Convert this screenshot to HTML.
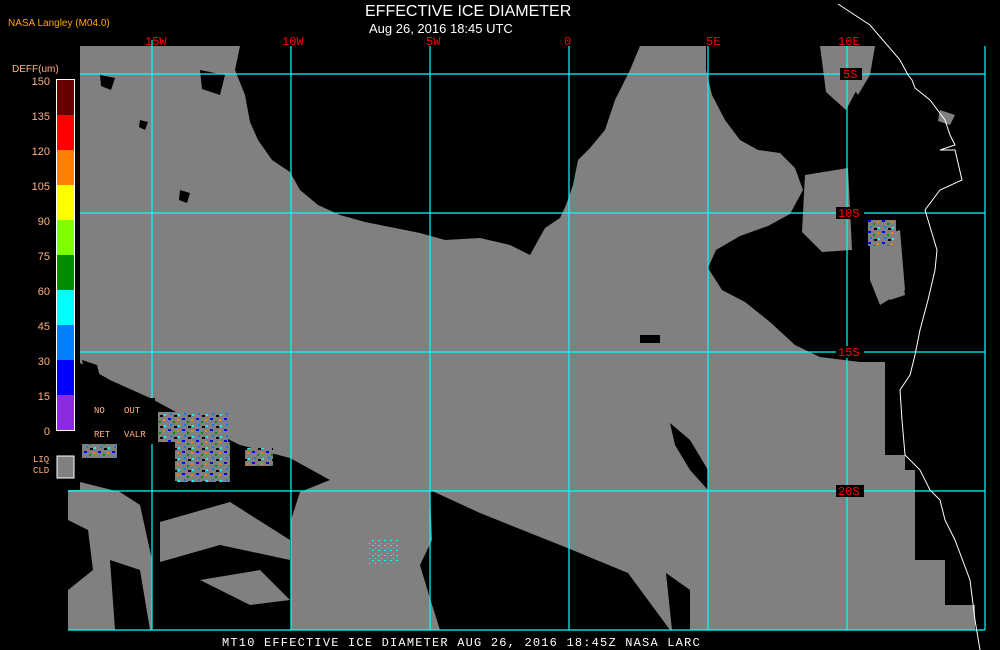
<!DOCTYPE html>
<html><head><meta charset="utf-8"><style>
html,body{margin:0;padding:0;background:#000;width:1000px;height:650px;overflow:hidden}
svg{display:block}
text{font-family:"Liberation Sans",sans-serif}
.m{font-family:"Liberation Mono",monospace}
</style></head><body>
<svg width="1000" height="650" viewBox="0 0 1000 650">
<defs>
<pattern id="sp" width="14" height="11" patternUnits="userSpaceOnUse">
<rect width="14" height="11" fill="#808080"/>
<rect x="0" y="0" width="3" height="2" fill="#0000ff"/>
<rect x="5" y="3" width="2" height="2" fill="#008c00"/>
<rect x="9" y="1" width="2" height="2" fill="#ff8000"/>
<rect x="2" y="6" width="2" height="2" fill="#0080ff"/>
<rect x="10" y="7" width="2" height="2" fill="#00ffff"/>
<rect x="6" y="8" width="3" height="2" fill="#000"/>
</pattern>
<pattern id="cy" width="6" height="5" patternUnits="userSpaceOnUse">
<rect width="6" height="5" fill="#808080"/>
<rect x="0" y="0" width="2" height="1" fill="#00ffff"/>
<rect x="3" y="3" width="1" height="1" fill="#00ffff"/>
</pattern>
</defs>
<rect width="1000" height="650" fill="#000"/>
<path fill="#808080" d="M80 46H985V630H68V490H80Z"/>
<g fill="#000">
<path d="M240 46H640L630 70 615 100 605 130 590 148 578 160 573 185 566 205 560 218 545 228 530 255 510 245 480 238 445 240 420 233 395 228 365 222 340 215 318 205 300 190 290 172 272 160 258 140 250 122 245 95 235 70Z"/>
<path d="M706 46H820L826 92 846 110 862 80 872 46H985V362H885L860 362 820 357 795 345 770 322 745 302 722 290 708 268 716 250 740 236 768 226 790 214 803 190 795 168 780 153 758 150 740 140 725 120 712 95 706 70Z"/>
<path d="M80 363L110 380 150 398 200 425 240 445 290 458 330 480 300 492 291 520 291 630H152V560L140 505 120 492 80 482Z"/>
<path d="M430 490L480 513 565 547 628 573 670 630H440L428 592 420 565 432 540Z"/>
<path d="M670 423L690 440 708 470 708 490 690 470 675 445Z"/>
<path d="M666 573L690 590 690 630H672Z"/>
<path d="M885 362H985V630H975V605H945V560H915V470H905V455H885Z"/>
<path d="M640 335h20v8h-20z"/>
<path d="M82 360l15 5 5 20-15 0z"/>
<path d="M180 190l10 3 -3 10 -8-3z"/>
<path d="M100 75l15 3 -4 12 -10-4z"/>
<path d="M140 120l8 2 -3 8-6-3z"/>
<path d="M200 70l25 5 -5 20 -18-6z"/>
<path d="M720 262l20 5 -8 10-12-5z"/>
<path d="M68 520l20 10 5 40 -25 20z"/>
<path d="M110 560l30 10 10 60h-35z"/>
</g>
<g fill="#808080">
<path d="M160 522L230 502 290 540 290 560 220 545 160 562Z"/>
<path d="M200 580L260 570 290 600 250 605Z"/>
<path d="M805 175L848 168 852 250 822 252 802 232Z"/>
<path d="M870 240L900 230 905 290 880 305 870 280Z"/>
<path d="M860 46H875L870 75 858 95 848 80Z"/>
<path d="M940 110l15 5-5 10-12-4z"/>
<path d="M880 270l20 -5 5 30 -15 5z"/>
</g>
<rect x="158" y="412" width="70" height="30" fill="url(#sp)"/>
<rect x="175" y="442" width="55" height="40" fill="url(#sp)"/>
<rect x="245" y="448" width="28" height="18" fill="url(#sp)"/>
<rect x="82" y="442" width="35" height="16" fill="url(#sp)"/>
<rect x="868" y="220" width="28" height="26" fill="url(#sp)"/>
<rect x="368" y="540" width="30" height="25" fill="url(#cy)"/>
<g stroke="#00ffff" stroke-width="1.2">
<line x1="152" y1="40" x2="152" y2="630"/>
<line x1="291" y1="46" x2="291" y2="630"/>
<line x1="430" y1="46" x2="430" y2="630"/>
<line x1="569" y1="46" x2="569" y2="630"/>
<line x1="708" y1="46" x2="708" y2="630"/>
<line x1="847" y1="46" x2="847" y2="630"/>
<line x1="985" y1="46" x2="985" y2="630"/>
<line x1="68" y1="74" x2="985" y2="74"/>
<line x1="68" y1="213" x2="985" y2="213"/>
<line x1="68" y1="352" x2="985" y2="352"/>
<line x1="68" y1="491" x2="985" y2="491"/>
<line x1="68" y1="630" x2="985" y2="630"/>
</g>
<polyline fill="none" stroke="#fff" stroke-width="1" points="838,4 870,25 900,60 908,75 912,80 915,88 930,100 945,120 950,135 955,145 940,150 955,150 962,180 940,190 925,210 937,250 935,270 928,300 920,330 915,355 910,375 900,390 902,420 905,455 920,470 930,490 940,500 945,520 955,540 970,580 975,620 980,650"/>
<g fill="#000">
<rect x="840" y="68" width="22" height="12"/>
<rect x="836" y="207" width="28" height="12"/>
<rect x="836" y="346" width="28" height="12"/>
<rect x="836" y="485" width="28" height="12"/>
</g>
<g fill="#ff0000" font-size="12">
<text x="145" y="45" class="m">15W</text>
<text x="282" y="45" class="m">10W</text>
<text x="426" y="45" class="m">5W</text>
<text x="564" y="45" class="m">0</text>
<text x="706" y="45" class="m">5E</text>
<text x="838" y="45" class="m">10E</text>
<text x="843" y="78" class="m">5S</text>
<text x="838" y="217" class="m">10S</text>
<text x="838" y="356" class="m">15S</text>
<text x="838" y="495" class="m">20S</text>
</g>
<text x="365" y="16" fill="#fff" font-size="16">EFFECTIVE ICE DIAMETER</text>
<text x="369" y="33" fill="#fff" font-size="13">Aug 26, 2016 18:45 UTC</text>
<text x="8" y="26" fill="#ffa500" font-size="10">NASA Langley (M04.0)</text>
<text x="222" y="646" fill="#fff" class="m" font-size="12" letter-spacing="1.2">MT10  EFFECTIVE ICE DIAMETER   AUG 26, 2016 18:45Z   NASA LARC</text>
<rect x="0" y="46" width="80" height="444" fill="#000"/>
<rect x="80" y="398" width="75" height="46" fill="#000"/>
<text x="12" y="72" fill="#ffb080" font-size="10">DEFF(um)</text>
<g>
<rect x="57" y="80" width="17" height="35" fill="#640000"/>
<rect x="57" y="115" width="17" height="35" fill="#ff0000"/>
<rect x="57" y="150" width="17" height="35" fill="#ff8000"/>
<rect x="57" y="185" width="17" height="35" fill="#ffff00"/>
<rect x="57" y="220" width="17" height="35" fill="#80ff00"/>
<rect x="57" y="255" width="17" height="35" fill="#008c00"/>
<rect x="57" y="290" width="17" height="35" fill="#00ffff"/>
<rect x="57" y="325" width="17" height="35" fill="#0080ff"/>
<rect x="57" y="360" width="17" height="35" fill="#0000ff"/>
<rect x="57" y="395" width="17" height="35" fill="#8a2be2"/>
<rect x="56.5" y="79.5" width="18" height="351" fill="none" stroke="#fff"/>
<rect x="57" y="456" width="17" height="22" fill="#808080" stroke="#fff"/>
</g>
<g fill="#ffb080" font-size="11" text-anchor="end">
<text x="50" y="85">150</text><text x="50" y="120">135</text><text x="50" y="155">120</text>
<text x="50" y="190">105</text><text x="50" y="225">90</text><text x="50" y="260">75</text>
<text x="50" y="295">60</text><text x="50" y="330">45</text><text x="50" y="365">30</text>
<text x="50" y="400">15</text><text x="50" y="435">0</text>
</g>
<g fill="#ffb080" font-size="9">
<text x="94" y="413" class="m">NO</text><text x="124" y="413" class="m">OUT</text>
<text x="94" y="437" class="m">RET</text><text x="124" y="437" class="m">VALR</text>
<text x="33" y="462" class="m">LIQ</text><text x="33" y="473" class="m">CLD</text>
</g>
</svg>
</body></html>
